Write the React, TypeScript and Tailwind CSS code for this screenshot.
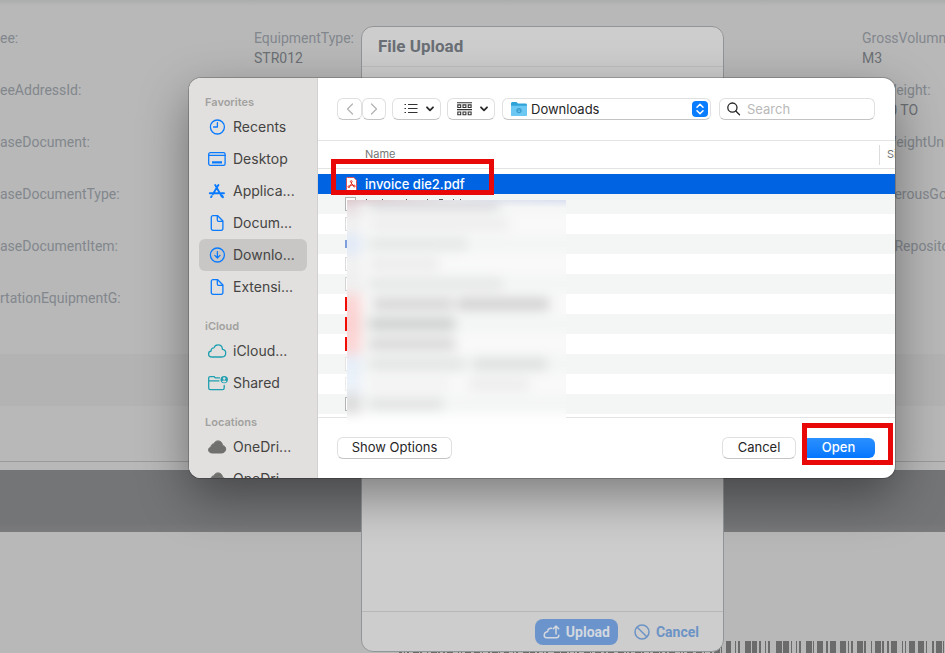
import type { ReactNode } from "react";

const leftFields = [
  "ee:",
  "eeAddressId:",
  "aseDocument:",
  "aseDocumentType:",
  "aseDocumentItem:",
  "rtationEquipmentG:",
];

const rightFields = [
  { label: "GrossVolumn:", value: "M3" },
  { label: "NetWeight:", value: "0.000 TO" },
  { label: "NetWeightUnit:", value: "" },
  { label: "DangerousGoods:", value: "" },
  { label: "Data Repository:", value: "" },
];

function Field({ label, value }: { label: string; value?: string }) {
  return (
    <div className="h-[52px] whitespace-nowrap text-sm leading-5">
      <dt className="text-[#82878d]">{label}</dt>
      <dd className="text-[#6c7075]">{value}</dd>
    </div>
  );
}

/* Barcode bars as [start, width] pairs, one repeat of the pattern. */
const bars = [
  [3, 5], [12, 1], [15, 2], [22, 6], [29, 5], [36, 2], [42, 1], [45, 2],
  [53, 6], [60, 6], [68, 1], [73, 1], [76, 2], [83, 6], [90, 1], [94, 6],
  [103, 2], [107, 6], [117, 6], [125, 1], [128, 2], [134, 6], [141, 2],
  [148, 1], [152, 6], [159, 2], [164, 2], [168, 6], [179, 1], [182, 1],
  [186, 6], [195, 6], [203, 1], [209, 2], [213, 6], [220, 1],
];
const repeats = [-120, 102, 324, 546];

function Barcode() {
  return (
    <svg className="block h-3 w-full" aria-hidden="true">
      {repeats.map((offset) =>
        bars.map(([x, w]) => (
          <rect key={`${offset}-${x}`} x={offset + x} y="0" width={w} height="12" fill="#6b6b6b" />
        )),
      )}
    </svg>
  );
}

const iconBase = { width: 20, height: 20, viewBox: "0 0 20 20", fill: "none", strokeLinecap: "round", strokeLinejoin: "round" } as const;

const ClockIcon = () => (
  <svg {...iconBase} stroke="#0a7aff" strokeWidth="1.3">
    <circle cx="10.4" cy="10" r="7" />
    <path d="M10.4 5.6V10H6.6" />
  </svg>
);
const DesktopIcon = () => (
  <svg {...iconBase} stroke="#0a7aff" strokeWidth="1.3">
    <rect x="1.7" y="3.7" width="16.4" height="12.6" rx="1.6" />
    <path d="M2 6.4h16" />
    <path d="M5 13.3h10" strokeWidth="2.2" strokeLinecap="butt" />
  </svg>
);
const AppsIcon = () => (
  <svg {...iconBase} stroke="#0a7aff" strokeWidth="1.9">
    <path d="M8.2 4l6.6 11.6M11.4 4L5.8 13.2M2.8 12.2h8.6M14.2 12.2h2.8M4.6 15.2l-.5.9M16 16.2l-.8-1.4" />
  </svg>
);
const DocIcon = () => (
  <svg {...iconBase} stroke="#0a7aff" strokeWidth="1.3">
    <path d="M5.9 2.7h4.8l5.2 5.3v7.7a1.6 1.6 0 0 1-1.6 1.6H5.9a1.6 1.6 0 0 1-1.6-1.6V4.3a1.6 1.6 0 0 1 1.6-1.6z" />
    <path d="M10.3 3v4a1.3 1.3 0 0 0 1.3 1.3h4" />
  </svg>
);
const DownloadIcon = () => (
  <svg {...iconBase} stroke="#0a7aff" strokeWidth="1.3">
    <circle cx="10.4" cy="10" r="7" />
    <path d="M10.4 6.6v6.2M7.8 10.4l2.6 2.6 2.6-2.6" />
  </svg>
);
const cloudPath =
  "M5 16C2.900 16 1.600 14.600 1.600 12.900c0-1.600 1.100-2.700 2.500-2.900-.1-2 1.200-3.200 2.800-3.100C7.600 5 9 3.900 11 3.900c2.600 0 4.400 1.900 4.500 4.500 1.900.2 3.200 1.700 3.200 3.600 0 2.300-1.600 4-3.900 4z";
const CloudIcon = () => (
  <svg {...iconBase} stroke="#1f9fb0" strokeWidth="1.3">
    <path d={cloudPath} />
  </svg>
);
const CloudFillIcon = () => (
  <svg {...iconBase} fill="#70706e">
    <path d={cloudPath} stroke="#70706e" />
  </svg>
);
const SharedIcon = () => (
  <svg {...iconBase} stroke="#1f9fb0" strokeWidth="1.3">
    <path d="M12.500 4.900H8.400L7 3.600H3.100c-.8 0-1.400.6-1.400 1.400v10c0 .9.7 1.600 1.600 1.600h12.300c.9 0 1.600-.7 1.600-1.600v-2.600M2 7.800h10" />
    <circle cx="17.200" cy="6.600" r="3.700" fill="#1f9fb0" stroke="none" />
    <circle cx="17.200" cy="5.500" r="1.200" fill="#e1e0de" stroke="none" />
    <path d="M15 8.700c.5-1.700 3.900-1.700 4.400 0-1 1.100-3.400 1.100-4.400 0z" fill="#e1e0de" stroke="none" />
  </svg>
);

function SidebarItem({ icon, label, active }: { icon: ReactNode; label: string; active?: boolean }) {
  return (
    <button
      type="button"
      className={`flex h-8 w-full shrink-0 items-center gap-[6px] rounded-md pl-2 text-left text-sm text-[#454443] [&>svg]:shrink-0 [&>svg]:overflow-visible ${active ? "bg-[#c8c7c5]" : ""}`}
    >
      {icon}
      <span className="whitespace-nowrap">{label}</span>
    </button>
  );
}

function SidebarGroup({ title, children }: { title: string; children: ReactNode }) {
  return (
    <section className="shrink-0">
      <h3 className="h-[18px] pl-[6px] text-[11px] font-semibold leading-[18px] text-[#a2a19f]">{title}</h3>
      {children}
    </section>
  );
}

const Chevron = () => (
  <svg width="8" height="6" viewBox="0 0 8 6" fill="none" stroke="#2a2a2a" strokeWidth="1.800" strokeLinecap="round" strokeLinejoin="round">
    <path d="M1 1.300l3 3 3-3" />
  </svg>
);

const control = "flex h-[22px] items-center rounded-md border border-[#e0e0e0] border-b-[#c4c4c4] bg-white";

function Toolbar() {
  return (
    <div className="flex h-[63px] items-center border-b border-[#e3e3e3] pl-[19px] pr-5">
      <button type="button" aria-label="Back" className={`${control} w-[25px] justify-center`}>
        <svg width="8" height="12" viewBox="0 0 8 12" fill="none" stroke="#b4b4b4" strokeWidth="1.300" strokeLinecap="round" strokeLinejoin="round"><path d="M6.500 1L1.500 6l5 5" /></svg>
      </button>
      <button type="button" aria-label="Forward" className={`${control} w-6 justify-center`}>
        <svg width="8" height="12" viewBox="0 0 8 12" fill="none" stroke="#b4b4b4" strokeWidth="1.300" strokeLinecap="round" strokeLinejoin="round"><path d="M1.500 1l5 5-5 5" /></svg>
      </button>
      <button type="button" aria-label="List view" className={`${control} ml-[6px] w-[49px] justify-end gap-2 pr-[6px]`}>
        <svg width="14" height="12" viewBox="0 0 14 12" fill="none" stroke="#333" strokeWidth="1.200">
          <path d="M4 1.500h9.500M4 5.500h9.500M4 9.500h9.500M.5 1.500H2M.5 5.500H2M.5 9.500H2" />
        </svg>
        <Chevron />
      </button>
      <button type="button" aria-label="Group items" className={`${control} ml-[6px] w-12 justify-end gap-2 pr-[6px]`}>
        <svg width="15" height="14" viewBox="0 0 15 14" fill="none" stroke="#333" strokeWidth="1.100">
          <path d="M0 .7h15M0 7.600h15" />
          <path d="M.8 2.900h2.900v2.600H.8zM6 2.900h2.900v2.600H6zM11.200 2.900h2.900v2.600h-2.900zM.8 10h2.900v2.800H.8zM6 10h2.900v2.800H6zM11.200 10h2.900v2.800h-2.900z" />
        </svg>
        <Chevron />
      </button>
      <div className={`${control} relative ml-[7px] w-[209px]`}>
        <svg className="pointer-events-none absolute left-2" width="16" height="14" viewBox="0 0 16 14">
          <path d="M0 1.500C0 .7.700 0 1.500 0h4l1.500 1.500h7.500c.8 0 1.500.7 1.500 1.500v9.500c0 .8-.7 1.500-1.500 1.500h-13C.7 14 0 13.300 0 12.500z" fill="#2fa3d8" />
          <path d="M0 3.800h16v8.700c0 .8-.7 1.500-1.500 1.500h-13C.7 14 0 13.300 0 12.500z" fill="#6cc8f3" />
          <circle cx="8" cy="8.600" r="2.700" fill="#3a9fd0" />
          <path d="M8 7.200v2.600M7 8.900l1 1 1-1" stroke="#6cc8f3" strokeWidth=".8" fill="none" />
        </svg>
        <select aria-label="Folder" className="h-full w-full appearance-none bg-transparent pl-7 text-[13px] leading-4 text-[#262626]">
          <option>Downloads</option>
        </select>
        <span className="pointer-events-none absolute right-[2px] flex size-4 items-center justify-center rounded bg-[#0a7dff]">
          <svg width="8" height="12" viewBox="0 0 8 12" fill="none" stroke="#fff" strokeWidth="1.500" strokeLinecap="round" strokeLinejoin="round">
            <path d="M1 4.300l3-3 3 3M1 7.700l3 3 3-3" />
          </svg>
        </span>
      </div>
      <label className={`${control} ml-2 min-w-0 flex-1 gap-[6px] pl-[7px]`}>
        <svg className="shrink-0" width="14" height="14" viewBox="0 0 14 14" fill="none" stroke="#262626" strokeWidth="1.300" strokeLinecap="round">
          <circle cx="5.400" cy="5.600" r="4.600" />
          <path d="M8.800 9l3.700 3.700" />
        </svg>
        <input aria-label="Search" placeholder="Search" className="min-w-0 flex-1 bg-transparent text-[13px] leading-4 outline-none placeholder:text-[#b9b9b9]" />
      </label>
    </div>
  );
}

type Blob = { left: string; width: string; tone: string };
type FileRow = { icon: string; tint: string; blobs: Blob[] };

/* Files whose names stay hidden behind the privacy blur. */
const hiddenFiles: FileRow[] = [
  { icon: "border border-[#b4b4b4] bg-white", tint: "bg-[#e6dcdf]", blobs: [{ left: "ml-2", width: "w-[130px]", tone: "bg-[#d9d9dc]" }] },
  { icon: "border border-[#dcdcdc] bg-white", tint: "bg-[#f0f0f0]", blobs: [{ left: "ml-2", width: "w-[140px]", tone: "bg-[#ededed]" }] },
  { icon: "bg-[#7d9fdc]", tint: "bg-[#e2eaf7]", blobs: [{ left: "ml-2", width: "w-[98px]", tone: "bg-[#e4e7e6]" }] },
  { icon: "border border-[#dcdcdc] bg-white", tint: "bg-[#f0f0f0]", blobs: [{ left: "ml-2", width: "w-[70px]", tone: "bg-[#ebebeb]" }] },
  { icon: "border border-[#d4d4d4] bg-white", tint: "bg-[#efefef]", blobs: [{ left: "ml-2", width: "w-[134px]", tone: "bg-[#e5e7e6]" }] },
  { icon: "bg-[#f00c00]", tint: "bg-[#fcd5d5]", blobs: [{ left: "ml-3", width: "w-[80px]", tone: "bg-[#d4d4d4]" }, { left: "ml-1", width: "w-[92px]", tone: "bg-[#cfcfcf]" }] },
  { icon: "bg-[#f00c00]", tint: "bg-[#fbd0d0]", blobs: [{ left: "ml-2", width: "w-[86px]", tone: "bg-[#cbcdcd]" }] },
  { icon: "bg-[#f00c00]", tint: "bg-[#fcd5d5]", blobs: [{ left: "ml-2", width: "w-[86px]", tone: "bg-[#d6d6d6]" }] },
  { icon: "border border-[#e4e4e4] bg-white", tint: "bg-[#e6eef8]", blobs: [{ left: "ml-2", width: "w-[96px]", tone: "bg-[#e2e4e3]" }, { left: "ml-2", width: "w-[74px]", tone: "bg-[#dddfde]" }] },
  { icon: "border border-[#ececec] bg-white", tint: "bg-[#ebf1f9]", blobs: [{ left: "ml-2", width: "w-[80px]", tone: "bg-[#f2f2f2]" }, { left: "ml-5", width: "w-[60px]", tone: "bg-[#ececec]" }] },
  { icon: "border border-[#b4b4b4] bg-white", tint: "bg-[#dcdcdc]", blobs: [{ left: "ml-2", width: "w-[74px]", tone: "bg-[#e1e3e2]" }] },
];

function FileList() {
  return (
    <div className="relative flex-1">
      <table className="w-full table-fixed border-separate border-spacing-0 text-left">
        <thead>
          <tr className="h-7 text-[11px] text-[#767676]">
            <th scope="col" className="border-b border-[#e3e3e3] p-0 pl-[47px] font-normal">Name</th>
            <th scope="col" className="w-4 border-b border-[#e3e3e3] p-0 font-normal">
              <div className="flex h-5 items-center overflow-hidden border-l border-[#dcdcdc] pl-[7px]">Size</div>
            </th>
          </tr>
        </thead>
        <tbody>
          <tr aria-hidden="true"><td colSpan={2} className="h-[5px] p-0" /></tr>
          <tr className="bg-[#0063e1] text-[13px] font-medium text-white">
            <td className="h-5 p-0 pl-7">
              <div className="flex items-center gap-2">
                <svg className="shrink-0" width="11" height="14" viewBox="0 0 11 14">
                  <path d="M.5 1.500c0-.6.400-1 1-1h6.300l2.700 2.700v9.300c0 .6-.4 1-1 1h-8c-.6 0-1-.4-1-1z" fill="#fff" stroke="#f03a30" strokeWidth=".8" />
                  <path d="M5.400 4.200L5.500 6.800M5.500 6.800L3.200 9.600M5.500 6.800L8.300 9" fill="none" stroke="#e3170a" strokeWidth="1" />
                  <circle cx="5.300" cy="4.600" r=".9" fill="#fff" stroke="#e3170a" strokeWidth=".9" />
                  <circle cx="2.900" cy="9.700" r=".9" fill="#fff" stroke="#e3170a" strokeWidth=".9" />
                  <circle cx="8.300" cy="9.100" r=".9" fill="#fff" stroke="#e3170a" strokeWidth=".9" />
                  <path d="M3.600 9c1.200-.7 2.600-.9 4-.4" fill="none" stroke="#e3170a" strokeWidth=".9" />
                </svg>
                <span className="whitespace-nowrap leading-5">invoice die2.pdf</span>
              </div>
            </td>
            <td className="p-0" />
          </tr>
          {hiddenFiles.map((file, i) => (
            <tr key={i} className={i % 2 === 0 ? "bg-[#f4f6f5]" : "bg-white"}>
              <td className="h-5 p-0 pl-[27px]">
                <div className="flex items-center gap-[9px]">
                  <span className={`block w-[11px] ${i === 2 ? "h-2" : "h-[14px]"} ${file.icon}`} />
                  {i === 0 && (
                    <svg width="100" height="14" viewBox="0 0 100 14" fill="#555" aria-hidden="true">
                      <path d="M1 2h1v8H1zM17 2h1v9h-1zM41 2h1v8h-1zM62 2h1v8h-1zM74 2h4v9h-4zM88 2h1v8h-1zM95 2h1v9h-1z" />
                    </svg>
                  )}
                </div>
              </td>
              <td className="p-0" />
            </tr>
          ))}
        </tbody>
      </table>
      <div aria-hidden="true" className="absolute left-[29px] top-[59px] h-[224px] w-[219px] overflow-hidden bg-[#f6f7f7]">
        <div className="-mt-[6px] blur-[6px]">
          {hiddenFiles.map((file, i) => (
            <div key={i} className={`-ml-2 -mr-4 flex h-5 items-center ${i % 2 === 0 ? "bg-[#f4f6f5]" : "bg-[#f9f9f9]"}`}>
              <span className={`h-5 w-[22px] shrink-0 ${file.tint}`} />
              {file.blobs.map((blob, j) => (
                <span key={j} className={`h-3 shrink-0 ${blob.left} ${blob.width} ${blob.tone}`} />
              ))}
            </div>
          ))}
          <div className="-ml-2 -mr-4 h-6 bg-white" />
        </div>
        <div className="absolute inset-x-0 top-0 h-2 bg-linear-to-r from-[#d9c3c8] via-[#e3e4e8] to-[#cfd6ee] opacity-70 mask-b-from-0% mask-b-to-100%" />
      </div>
      <div aria-hidden="true" className="absolute left-[13px] top-[18px] h-9 w-[163px] border-5 border-[#e90808]" />
    </div>
  );
}

function FileDialog() {
  return (
    <div role="dialog" aria-label="Choose a file" className="flex h-[400px] w-[706px] overflow-hidden rounded-xl bg-white font-[Inter,'Liberation_Sans',sans-serif] shadow-[0_0_0_1px_rgba(0,0,0,0.2),0_18px_50px_rgba(0,0,0,0.4)]">
      <nav aria-label="Places" className="flex w-[129px] shrink-0 flex-col gap-[14px] overflow-hidden border-r border-[#d2d1cf] bg-[#e1e0de] px-[10px] pt-[15px]">
        <SidebarGroup title="Favorites">
          <SidebarItem icon={<ClockIcon />} label="Recents" />
          <SidebarItem icon={<DesktopIcon />} label="Desktop" />
          <SidebarItem icon={<AppsIcon />} label="Applica..." />
          <SidebarItem icon={<DocIcon />} label="Docum..." />
          <SidebarItem icon={<DownloadIcon />} label="Downlo..." active />
          <SidebarItem icon={<DocIcon />} label="Extensi..." />
        </SidebarGroup>
        <SidebarGroup title="iCloud">
          <SidebarItem icon={<CloudIcon />} label="iCloud..." />
          <SidebarItem icon={<SharedIcon />} label="Shared" />
        </SidebarGroup>
        <SidebarGroup title="Locations">
          <SidebarItem icon={<CloudFillIcon />} label="OneDri..." />
          <SidebarItem icon={<CloudFillIcon />} label="OneDri..." />
        </SidebarGroup>
      </nav>
      <div className="flex min-w-0 flex-1 flex-col">
        <Toolbar />
        <FileList />
        <div className="flex h-[61px] items-center border-t border-[#e3e3e3] pl-[19px] pr-5 text-[13px] text-[#262626]">
          <button type="button" className={`${control} w-[115px] justify-center`}>Show Options</button>
          <button type="button" className={`${control} ml-auto w-[74px] justify-center`}>Cancel</button>
          <div className="relative ml-[6px]">
            <button type="button" className="flex h-5 w-[73px] items-center justify-center rounded-md bg-linear-to-b from-[#2a90ff] to-[#0276ff] font-medium text-white">Open</button>
            <div aria-hidden="true" className="absolute -top-[15px] left-0 h-[42px] w-[91px] border-5 border-[#e90808]" />
          </div>
        </div>
      </div>
    </div>
  );
}

function UploadModal() {
  return (
    <div role="dialog" aria-label="File Upload" className="flex h-[626px] w-[363px] flex-col rounded-xl border border-[#939698] bg-[#cdcdcd]">
      <h2 className="h-10 shrink-0 border-b border-[#bdbebe] pl-4 text-[17px] font-bold leading-[39px] text-[#6a6f75]">File Upload</h2>
      <div className="flex-1" />
      <div className="flex h-10 shrink-0 items-center justify-end gap-4 border-t border-[#b7b7b7] pr-6 text-sm font-bold">
        <button type="button" className="flex h-[26px] items-center gap-[6px] rounded-lg bg-[#6b94cd] px-2 text-[#d3d8df]">
          <svg width="17" height="16" viewBox="0 0 17 16" fill="none" stroke="currentColor" strokeWidth="1.500" strokeLinecap="round" strokeLinejoin="round">
            <path d="M8.500 4.300C6.500 3.900 4.800 5.300 4.700 7.500 2.600 8 1.200 9.400 1.200 11.300c0 1.600 1 2.400 2.300 2.400h10c1.400 0 2.300-.9 2.300-2.400M13 10V2.300M10.300 4.700L13 2l2.700 2.700" />
          </svg>
          Upload
        </button>
        <button type="button" className="flex h-[26px] items-center gap-[6px] text-[#6c93c5]">
          <svg width="16" height="16" viewBox="0 0 16 16" fill="none" stroke="currentColor" strokeWidth="1.500">
            <circle cx="8" cy="8" r="7" />
            <path d="M3 3l10 10" />
          </svg>
          Cancel
        </button>
      </div>
    </div>
  );
}

export default function App() {
  return (
    <div className="relative h-screen overflow-hidden bg-[#b8b8b8] font-[Roboto,'Noto_Sans',sans-serif]">
      <main className="flex h-full flex-col">
        <div className="h-[6px] shrink-0 bg-linear-to-b from-[#abadac] to-[#b8b8b8]" />
        <div className="grid h-[348px] shrink-0 grid-cols-[254px_608px_1fr] pt-[22px]">
          <dl>{leftFields.map((label) => <Field key={label} label={label} />)}</dl>
          <dl><Field label="EquipmentType:" value="STR012" /></dl>
          <dl className="min-w-0 overflow-hidden">
            {rightFields.map((f) => <Field key={f.label} label={f.label} value={f.value} />)}
          </dl>
        </div>
        <div className="h-[52px] shrink-0 bg-[#b3b3b3]" />
        <div className="h-14 shrink-0 border-b border-[#999a9b]" />
        <div className="mt-2 h-[62px] shrink-0 bg-linear-to-b from-[#747577] from-85% to-[#7a7a7c]" />
        <div className="mt-[109px] shrink-0 pl-[399px]">
          <Barcode />
        </div>
      </main>
      <div className="absolute inset-0 flex items-start justify-center pl-[140px] pt-[26px]">
        <UploadModal />
      </div>
      <div className="absolute inset-0 flex items-start justify-center pl-[139px] pt-[78px]">
        <FileDialog />
      </div>
    </div>
  );
}
